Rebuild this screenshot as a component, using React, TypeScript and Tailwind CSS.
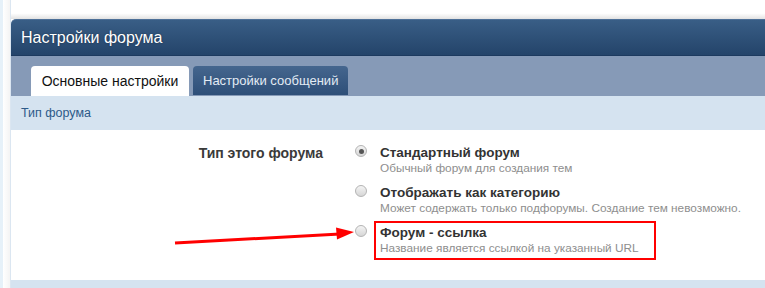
import React from "react";

const Radio = ({ checked }: { checked?: boolean }) => (
  <div className="mt-0 h-[12px] w-[12px] shrink-0 rounded-full border border-[#b4b4b4] bg-gradient-to-b from-[#f4f4f4] to-[#d6d6d6] flex items-center justify-center">
    {checked && <div className="h-[5px] w-[5px] rounded-full bg-[#555]" />}
  </div>
);

const options = [
  { title: "Стандартный форум", hint: "Обычный форум для создания тем", checked: true },
  { title: "Отображать как категорию", hint: "Может содержать только подфорумы. Создание тем невозможно." },
];

const App = () => {
  return (
    <div
      className="relative flex h-[288px] w-[765px] overflow-hidden bg-white"
      style={{ fontFamily: '"Liberation Sans", Arial, sans-serif' }}
    >
      {/* page edge */}
      <div className="w-[3px] shrink-0 bg-[#e6f1f9]" />
      <div className="w-[7px] shrink-0 bg-gradient-to-r from-white to-[#f4f4f4]" />
      <div className="w-[1px] shrink-0 bg-[#dbe6f1]" />

      <div className="flex min-w-[760px] flex-col">
        <div className="h-[19px] shrink-0 bg-gradient-to-b from-white from-70% to-[#e2e2e2]" />

        {/* Header */}
        <div className="h-[37px] shrink-0 rounded-tl-[5px] border-t border-[#4d7098] border-b border-b-[#1d3a5f] bg-gradient-to-b from-[#395e86] to-[#24446a] pl-[10px] flex items-center">
          <span className="text-[16px] text-white [text-shadow:0_0_2px_rgba(0,0,0,0.4)]">Настройки форума</span>
        </div>

        {/* Tabs */}
        <div className="h-[40px] shrink-0 bg-[#869ab7] pl-[20px] pt-[10px] flex items-end gap-[4px]">
          <div className="h-[30px] w-[158px] rounded-t-[4px] bg-white flex items-center justify-center text-[14px] text-[#111]">
            Основные настройки
          </div>
          <div className="mb-[1px] h-[29px] rounded-t-[4px] bg-gradient-to-b from-[#45668e] to-[#2e4f78] px-[10px] flex items-center text-[13px] text-[#e3ebf4]">
            Настройки сообщений
          </div>
        </div>

        {/* Section title */}
        <div className="h-[34px] shrink-0 bg-[#d5e3f0] pl-[10px] flex items-center text-[12.5px] text-[#2d5a89]">
          Тип форума
        </div>

        {/* Content */}
        <div className="h-[150px] shrink-0 bg-white pt-[15px] flex">
          <div className="w-[312px] shrink-0 text-right text-[14px] font-bold leading-[16px] text-[#3a3a3a]">
            Тип этого форума
          </div>
          <div className="ml-[32px] flex flex-col">
            {options.map((o) => (
              <div key={o.title} className="mb-[10px] flex">
                <Radio checked={o.checked} />
                <div className="ml-[13px]">
                  <div className="text-[13.5px] font-bold leading-[16px] text-[#333]">{o.title}</div>
                  <div className="text-[11.8px] leading-[14px] text-[#8e8e8e]">{o.hint}</div>
                </div>
              </div>
            ))}
            <div className="flex">
              <Radio />
              <div className="-mt-[4px] ml-[7px] w-[282px] border-2 border-[#f00] pl-[4px] pt-[2px] pb-[3px]">
                <div className="text-[13.5px] font-bold leading-[16px] text-[#333]">Форум - ссылка</div>
                <div className="text-[11.8px] leading-[14px] text-[#8e8e8e]">Название является ссылкой на указанный URL</div>
              </div>
            </div>
          </div>
        </div>

        <div className="flex-1 bg-[#d5e3f0]" />
      </div>

      {/* annotation arrow */}
      <svg className="pointer-events-none absolute left-0 top-0" width="765" height="288">
        <line x1="175" y1="243" x2="340" y2="234" stroke="#f00" strokeWidth="3" />
        <polygon points="354,232 336,227.5 337,239.5" fill="#f00" />
      </svg>
    </div>
  );
};

export default App;
